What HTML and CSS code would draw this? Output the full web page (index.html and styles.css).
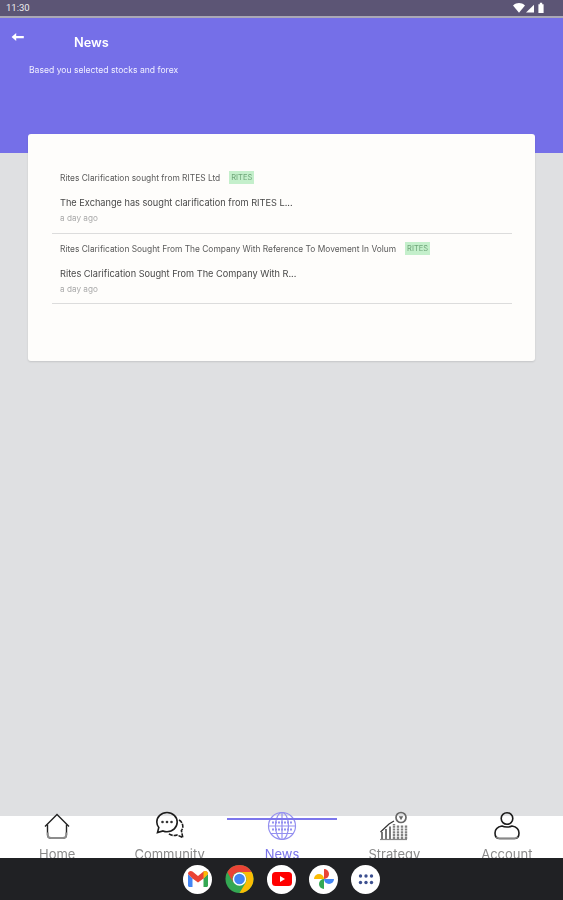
FILE: index.html
```html
<!DOCTYPE html>
<html lang="en">
<head>
<meta charset="utf-8">
<title>News</title>
<link rel="stylesheet" href="styles.css">
</head>
<body>
<div class="screen">
  <div class="status">
    <span class="time">11:30</span>
    <svg class="status-icons" width="33" height="12" viewBox="0 0 33 12">
      <path d="M0 3.400C2 1.600 4 .9 6 .9s4 .7 6 2.500L6 10.800z" fill="#fff"/>
      <path d="M13 10.600 21 2.800v7.800z" fill="#fff"/>
      <path d="M25.400 2.200h1.400V.8h2.400v1.400h1.400v8.800h-5.200z" fill="#fff"/>
    </svg>
  </div>
  <header class="hero">
    <div class="hero-top">
      <svg class="back" width="14" height="10" viewBox="0 0 14 10"><path d="M5.200 1 .6 5l4.600 4V6.200h7.600V3.900H5.200z" fill="#fff"/></svg>
      <h1 class="hero-title">News</h1>
    </div>
    <p class="hero-sub">Based you selected stocks and forex</p>
  </header>
  <main class="content">
    <section class="card">
      <article class="item">
        <div class="item-head"><span class="item-title">Rites Clarification sought from RITES Ltd</span><span class="tag">RITES</span></div>
        <p class="item-body">The Exchange has sought clarification from RITES L...</p>
        <p class="item-time">a day ago</p>
      </article>
      <article class="item">
        <div class="item-head"><span class="item-title">Rites Clarification Sought From The Company With Reference To Movement In Volum</span><span class="tag">RITES</span></div>
        <p class="item-body">Rites Clarification Sought From The Company With R...</p>
        <p class="item-time">a day ago</p>
      </article>
    </section>
  </main>
  <nav class="tabs">
    <div class="tab">
      <svg class="tab-icon" width="30" height="30" viewBox="0 0 30 30" fill="none" stroke="#222" stroke-width="1.400">
        <path d="M3 15.500 15 3.500l12 12"/>
        <path d="M5.500 13.500v10c0 2.500 1.500 3.700 3.500 3.700h12c2 0 3.500-1.200 3.500-3.700v-10"/>
        <path d="M5.800 21.500v2.500c0 1.800 1.300 3 3.200 3h12c1.900 0 3.200-1.200 3.200-3v-2.500" stroke="#8d8d8d" stroke-width="1.900"/>
      </svg>
      <span class="tab-label">Home</span>
    </div>
    <div class="tab">
      <svg class="tab-icon" width="30" height="30" viewBox="0 0 30 30" fill="none" stroke="#1c1c1c" stroke-width="1.600">
        <path d="M12 1.500c5.800 0 10.200 4.300 10.200 9.600s-4.400 9.600-10.200 9.600c-1.400 0-2.800-.3-4-.8L2.500 21.500l1.300-5C2.600 15 1.800 13.200 1.800 11.100 1.800 5.800 6.200 1.500 12 1.500z"/>
        <path d="M24 9c2.400 1.400 3.800 3.700 3.800 6.300 0 1.600-.5 3.100-1.400 4.300l1.400 7-5.700-2.600c-3 1-6.300.4-8.600-1.400" stroke-dasharray="4 1"/>
        <circle cx="7.500" cy="11" r="1.300" fill="#333" stroke="none"/><circle cx="12" cy="11" r="1.300" fill="#333" stroke="none"/><circle cx="16.500" cy="11" r="1.300" fill="#333" stroke="none"/>
      </svg>
      <span class="tab-label">Community</span>
    </div>
    <div class="tab is-active">
      <span class="tab-bar"></span>
      <svg class="tab-icon" width="30" height="30" viewBox="0 0 30 30" fill="none" stroke="#9490f0" stroke-width="1.200">
        <circle cx="15" cy="15" r="13.500"/>
        <ellipse cx="15" cy="15" rx="6.500" ry="13.500"/>
        <path d="M15 1.500v27M4 7.500h22M1.500 15h27M4 22.500h22"/>
        <path d="M5 11.500h20M5 18.500h20" stroke-dasharray="2 1" stroke-width="2"/>
      </svg>
      <span class="tab-label">News</span>
    </div>
    <div class="tab">
      <svg class="tab-icon" width="30" height="30" viewBox="0 0 30 30" fill="none" stroke="#666" stroke-width="1.200">
        <path d="M3 28V21M7 28V18M11 28V15.500" stroke-width="2" stroke="#777"/>
        <path d="M15 28V13M19 28V14M23 28V14M27 28V14" stroke-width="2.400" stroke="#808080" stroke-dasharray="2.200 .6"/>
        <path d="M1.500 21 10 13l5-3" stroke="#333"/>
        <circle cx="22" cy="6.500" r="5" stroke-width="1.700" stroke="#666"/>
        <path d="M19.800 5.300 22 9.300l2.200-4z" fill="#666" stroke="none"/>
        <path d="M1 28.500h27" stroke="#888"/>
      </svg>
      <span class="tab-label">Strategy</span>
    </div>
    <div class="tab">
      <svg class="tab-icon" width="30" height="30" viewBox="0 0 30 30" fill="none" stroke="#1c1c1c" stroke-width="1.600">
        <circle cx="15" cy="7.500" r="5.800"/>
        <path d="M10 15c-4 .8-7 3.500-7 7 0 3.500 1.500 5.500 4.500 5.500h15c3 0 4.500-2 4.500-5.500 0-3.500-3-6.200-7-7-1.500.8-3 1-5 1s-3.500-.2-5-1z"/>
        <path d="M4.500 26c.8 1 1.700 1.500 3 1.500h15c1.300 0 2.200-.5 3-1.500" stroke="#888" stroke-width="1.700"/>
      </svg>
      <span class="tab-label">Account</span>
    </div>
  </nav>
  <div class="dock">
    <span class="app">
      <svg width="20" height="16" viewBox="0 0 20 16">
        <path d="M0 3v11.500C0 15.300.7 16 1.500 16H4.500V7.500z" fill="#4285f4"/>
        <path d="M20 3v11.500c0 .8-.7 1.500-1.500 1.500h-3V7.500z" fill="#34a853"/>
        <path d="M0 3C0 .6 2.600-.8 4.500.6L10 5l5.500-4.400C17.400-.8 20 .6 20 3l-4.500 4.500L10 11.500 4.500 7.500z" fill="#ea4335"/>
        <path d="M15.500.6C17.400-.8 20 .6 20 3l-4.500 4.500z" fill="#fbbc04"/>
      </svg>
    </span>
    <span class="app app-chrome">
      <svg width="30" height="30" viewBox="0 0 30 30">
        <circle cx="15" cy="15" r="14.500" fill="#34a853"/>
        <path d="M2.400 7.800A14.500 14.500 0 0 1 27.600 7.800H15a7.500 7.500 0 0 0-6.500 11z" fill="#ea4335"/>
        <path d="M27.600 7.800A14.500 14.500 0 0 1 15 29.500l6.500-11A7.500 7.500 0 0 0 15 7.800z" fill="#fbbc04"/>
        <circle cx="15" cy="15" r="7" fill="#fff"/><circle cx="15" cy="15" r="5.500" fill="#4285f4"/>
      </svg>
    </span>
    <span class="app">
      <svg width="20" height="14" viewBox="0 0 20 14">
        <rect width="20" height="14" rx="3.500" fill="#f00"/><path d="M8 4v6l5-3z" fill="#fff"/>
      </svg>
    </span>
    <span class="app">
      <svg width="20" height="20" viewBox="0 0 20 20">
        <path d="M10 10H0a5 5 0 0 1 10 0z" fill="#fbbc04"/>
        <path d="M10 10V0a5 5 0 0 1 0 10z" fill="#ea4335"/>
        <path d="M10 10h10a5 5 0 0 1-10 0z" fill="#4285f4"/>
        <path d="M10 10v10a5 5 0 0 1 0-10z" fill="#34a853"/>
      </svg>
    </span>
    <span class="app">
      <svg width="16" height="11" viewBox="0 0 16 11" fill="#3c4f8f">
        <circle cx="2.500" cy="2" r="1.700"/><circle cx="8" cy="2" r="1.700"/><circle cx="13.500" cy="2" r="1.700"/>
        <circle cx="2.500" cy="8.500" r="1.700"/><circle cx="8" cy="8.500" r="1.700"/><circle cx="13.500" cy="8.500" r="1.700"/>
      </svg>
    </span>
  </div>
</div>
</body>
</html>
```

FILE: styles.css
```css
* { box-sizing: border-box; }
html, body { margin: 0; padding: 0; }
body { font-family: Inter, Roboto, "Liberation Sans", sans-serif; background: #dfe0e2; }
p, h1 { margin: 0; }

.screen { width: 563px; height: 900px; display: flex; flex-direction: column; overflow: hidden; filter: blur(.4px); }

.status { flex: 0 0 18px; background: #5c5575; border-bottom: 2px solid #aaa8b6; display: flex; align-items: center; justify-content: space-between; padding: 0 17px 1px 6px; color: #eee; }
.time { font-size: 9.500px; font-family: Roboto, sans-serif; }
.status-icons { display: block; }

.hero { flex: 0 0 135px; background: #756fe8; color: #fff; padding: 14px 0 0 11px; }
.hero-top { display: flex; align-items: flex-start; }
.back { display: block; }
.hero-title { font-size: 12.800px; font-weight: 600; line-height: 16px; margin: 3px 0 0 49px; }
.hero-sub { font-size: 8.600px; line-height: 12px; margin: 13px 0 0 18px; color: #f0efff; }

.content { flex: 1 1 auto; padding: 0 28px; min-height: 0; }
.card { height: 227px; margin-top: -19px; background: #fefdfb; border-radius: 3px; box-shadow: 0 1px 2px rgba(0,0,0,.12); padding: 33px 23px 0 24px; }

.item { border-bottom: 1px solid #dcdcdc; height: 67px; padding: 0 8px; }
.item + .item { height: 70px; padding-top: 4px; }
.item-head { display: flex; align-items: center; height: 21px; }
.item-title { font-size: 8.400px; color: #5a5a5a; white-space: nowrap; }
.tag { font-size: 7.500px; line-height: 13px; height: 13px; padding: 0 2px; margin-left: 9px; background: #c4efcb; color: #6ea578; }
.item-body { font-size: 9.200px; line-height: 12px; color: #484848; margin-top: 9px; white-space: nowrap; }
.item-time { font-size: 8.200px; line-height: 10px; color: #aaa; margin-top: 4px; }

.tabs { flex: 0 0 42px; background: #fff; display: grid; grid-template-columns: repeat(5, 1fr); padding-left: 1px; }
.tab { display: flex; flex-direction: column; align-items: center; position: relative; height: 42px; }
.tab-icon { display: block; margin-top: -5px; flex: none; }
.tab-label { font-size: 13px; line-height: 16px; color: #8a8a8a; margin-top: 5px; white-space: nowrap; }
.is-active .tab-label { color: #7a74ea; }
.tab-bar { position: absolute; top: 2px; left: 1px; right: 1px; height: 2px; background: #7c76ec; }

.dock { flex: 0 0 42px; background: #202124; display: flex; justify-content: center; align-items: center; gap: 13px; position: relative; z-index: 2; }
.app { width: 29px; height: 29px; border-radius: 50%; background: #fff; display: flex; align-items: center; justify-content: center; }
.app-chrome { background: transparent; }
.app-chrome svg { display: block; }
```
